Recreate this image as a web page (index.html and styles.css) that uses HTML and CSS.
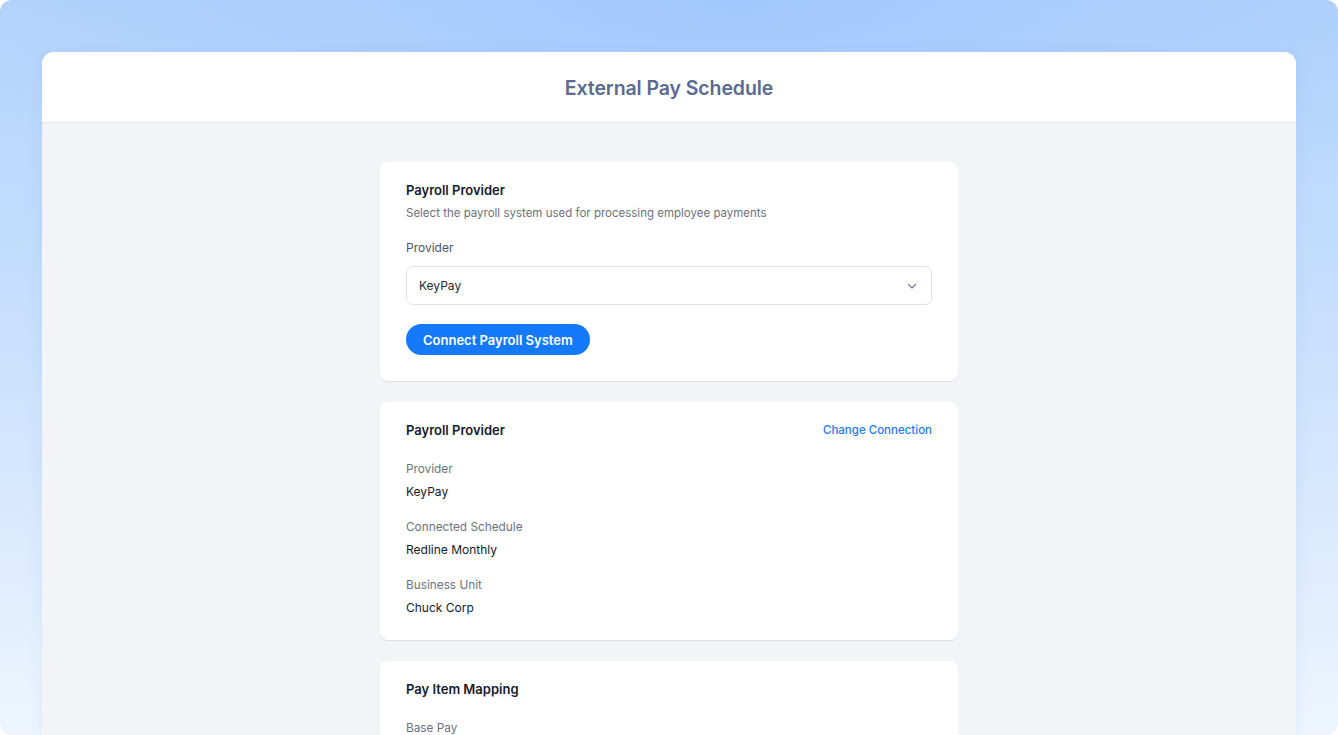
FILE: index.html
```html
<!DOCTYPE html>
<html lang="en">
<head>
<meta charset="utf-8">
<title>External Pay Schedule</title>
<link rel="stylesheet" href="styles.css">
</head>
<body>
<div class="screen">
  <div class="window">
    <header class="window-header">
      <h1 class="page-title">External Pay Schedule</h1>
    </header>
    <main class="content">
      <section class="card card-connect">
        <h2 class="card-title">Payroll Provider</h2>
        <p class="card-desc">Select the payroll system used for processing employee payments</p>
        <label class="field-label">Provider</label>
        <div class="select">
          <span class="select-value">KeyPay</span>
          <svg class="chevron" width="12" height="12" viewBox="0 0 12 12" fill="none"><path d="M2.5 4.5L6 8L9.5 4.5" stroke="#6b7280" stroke-width="1.1" stroke-linecap="round" stroke-linejoin="round"/></svg>
        </div>
        <button class="btn-primary">Connect Payroll System</button>
      </section>

      <section class="card card-details">
        <div class="card-head">
          <h2 class="card-title">Payroll Provider</h2>
          <a class="link">Change Connection</a>
        </div>
        <div class="detail">
          <div class="detail-label">Provider</div>
          <div class="detail-value">KeyPay</div>
        </div>
        <div class="detail">
          <div class="detail-label">Connected Schedule</div>
          <div class="detail-value">Redline Monthly</div>
        </div>
        <div class="detail">
          <div class="detail-label">Business Unit</div>
          <div class="detail-value">Chuck Corp</div>
        </div>
      </section>

      <section class="card card-mapping">
        <h2 class="card-title">Pay Item Mapping</h2>
        <div class="detail">
          <div class="detail-label">Base Pay</div>
        </div>
      </section>
    </main>
  </div>
</div>
</body>
</html>
```
FILE: styles.css
```css
* { box-sizing: border-box; }
html, body { margin: 0; padding: 0; height: 100%; overflow: hidden; }
html { background: #ffffff; }
body {
  font-family: Inter, "Noto Sans", sans-serif;
  background: #ffffff;
}
.screen {
  height: 735px;
  padding: 52px 42px 0 42px;
  border-radius: 12px;
  overflow: hidden;
  background:
    radial-gradient(ellipse 60% 35% at 55% 0%, rgba(160, 200, 253, 0.9) 0%, rgba(160, 200, 253, 0) 100%),
    linear-gradient(180deg, #b4d3fd 0%, #c8e0fd 45%, #eef5ff 100%);
}
.window {
  height: 100%;
  background: #f3f4f8;
  border-radius: 12px 12px 0 0;
  overflow: hidden;
  display: flex;
  flex-direction: column;
  box-shadow: 0 4px 16px rgba(60, 100, 160, 0.08);
}
.window-header {
  flex-shrink: 0;
  height: 71px;
  padding-top: 2px;
  background: #fff;
  border-bottom: 1px solid #e3e6ee;
  display: flex;
  align-items: center;
  justify-content: center;
}
.page-title {
  margin: 0;
  font-size: 19.5px;
  font-weight: 600;
  color: #5b6a8e;
  letter-spacing: -0.1px;
}
.content {
  flex: 1;
  min-height: 0;
  overflow: hidden;
  display: flex;
  flex-direction: column;
  align-items: center;
  padding-top: 39px;
  gap: 21px;
}
.card {
  flex-shrink: 0;
  width: 578px;
  background: #fff;
  border-radius: 8px;
  box-shadow: 0 1px 0 #dde1ea, 0 1px 2px rgba(20, 30, 60, 0.04);
  padding: 19px 26px 26px 26px;
}
.card-title {
  margin: 0;
  font-size: 13px;
  font-weight: 600;
  color: #141b2d;
  line-height: 18px;
}
.card-desc {
  margin: 6px 0 0 0;
  font-size: 11.5px;
  color: #6b7280;
  line-height: 16px;
}
.field-label {
  display: block;
  margin-top: 19px;
  font-size: 12px;
  color: #4b5563;
  line-height: 16px;
}
.select {
  margin-top: 10px;
  height: 39px;
  border: 1px solid #dfe2ea;
  border-radius: 7px;
  display: flex;
  align-items: center;
  justify-content: space-between;
  padding: 0 13px 0 12px;
}
.select-value {
  font-size: 12px;
  color: #1f2937;
}
.btn-primary {
  margin-top: 19px;
  height: 31px;
  padding: 0 17px;
  border: none;
  border-radius: 16px;
  background: #1479fb;
  color: #fff;
  font-family: inherit;
  font-size: 13px;
  font-weight: 600;
}
.card-details { padding-bottom: 24px; }
.card-head {
  display: flex;
  align-items: center;
  justify-content: space-between;
}
.link {
  font-size: 11.5px;
  color: #1a7af8;
  font-weight: 500;
}
.detail { margin-top: 19px; }
.card-head + .detail,
.card-title + .detail { margin-top: 22px; }
.detail-label {
  font-size: 11.8px;
  color: #6b7280;
  line-height: 16px;
}
.detail-value {
  margin-top: 7px;
  font-size: 12px;
  color: #141b2d;
  line-height: 16px;
  font-weight: 400;
}
```
